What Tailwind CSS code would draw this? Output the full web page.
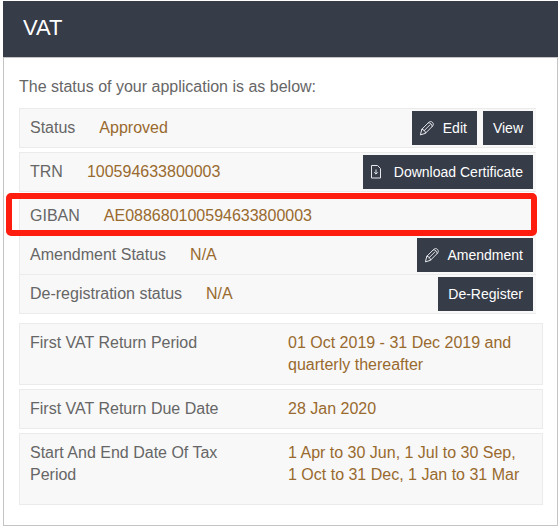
<!DOCTYPE html>
<html lang="en">
<head>
  <meta charset="UTF-8">
  <title>VAT</title>
  <meta name="viewport" content="width=device-width, initial-scale=1.0">
  <script src="https://cdn.jsdelivr.net/npm/@tailwindcss/browser@4"></script>
  <style>
    body { font-family: 'Liberation Sans', Arial, sans-serif; }
  </style>
</head>
<body class="bg-white text-base text-[#666666]">
  <svg class="hidden">
    <symbol id="pencil" viewBox="0 0 16 16" fill="none" stroke="currentColor" stroke-linejoin="round" stroke-linecap="round">
      <path d="M1.5 14.5l1.3-5.2 6.6-6.6c1.4-1.4 3-1.4 4.1-.3s1.1 2.7-.3 4.1l-6.6 6.6zM2.8 9.3c1.9.1 3.6 1.7 3.8 3.8M9.4 2.7c2 .1 3.7 1.8 3.8 3.8M5 10.8l5.8-5.8"/>
    </symbol>
  </svg>

  <main class="pt-px pl-[3px] pr-px">
    <header class="bg-[#363c48] h-14 px-5 pb-[3px] flex items-center">
      <h1 class="text-[22px] text-white">VAT</h1>
    </header>

    <section class="border border-[#c4c4c4] pl-[15px] pr-[14px] pt-[18px] pb-5">
      <p class="leading-[22px] mb-[10px]">The status of your application is as below:</p>

      <div class="mr-[7px] mb-[9px]">
        <div class="h-10 mb-1 pl-[10px] pr-[3px] flex items-center bg-[#f8f8f8] border border-r-0 border-[#ebebeb]">
          <span>Status</span>
          <span class="ml-6 text-[#996a2e]">Approved</span>
          <div class="ml-auto flex gap-[6px]">
            <button type="button" class="h-[34px] pl-[7px] pr-[10px] flex items-center gap-2 bg-[#363c48] text-white text-sm">
              <svg class="w-4 h-4 text-gray-200"><use href="#pencil"/></svg>Edit
            </button>
            <button type="button" class="h-[34px] px-[10px] bg-[#363c48] text-white text-sm">View</button>
          </div>
        </div>

        <div class="h-10 mb-1 pl-[10px] pr-[3px] flex items-center bg-[#f8f8f8] border border-r-0 border-[#ebebeb]">
          <span>TRN</span>
          <span class="ml-6 text-[#996a2e]">100594633800003</span>
          <button type="button" class="ml-auto h-[34px] pl-[7px] pr-[10px] flex items-center gap-2 bg-[#363c48] text-white text-sm">
            <svg class="w-4 h-4 text-gray-200" viewBox="0 0 16 16" fill="none" stroke="currentColor">
              <path d="M1.5 1.5h6l3 3v9.500h-9zM6 5.500v4.500M4.200 8.300l1.800 1.800 1.800-1.800"/>
            </svg>Download Certificate
          </button>
        </div>

        <div class="relative h-10 pl-[10px] flex items-center bg-[#f8f8f8] border border-r-0 border-[#ebebeb]">
          <span>GIBAN</span>
          <span class="ml-6 text-[#996a2e]">AE088680100594633800003</span>
          <div class="absolute -left-[14px] -right-px -top-[4px] -bottom-[1px] border-[6px] border-[#ff1d10] rounded-[5px]"></div>
        </div>

        <div class="h-[39px] pl-[10px] pr-[3px] flex items-center bg-[#f8f8f8] border border-t-0 border-r-0 border-[#ebebeb]">
          <span>Amendment Status</span>
          <span class="ml-6 text-[#996a2e]">N/A</span>
          <button type="button" class="ml-auto h-[34px] pl-[7px] pr-[10px] flex items-center gap-2 bg-[#363c48] text-white text-sm">
            <svg class="w-4 h-4 text-gray-200"><use href="#pencil"/></svg>Amendment
          </button>
        </div>

        <div class="h-[39px] pl-[10px] pr-[3px] flex items-center bg-[#f8f8f8] border border-t-0 border-r-0 border-[#ebebeb]">
          <span>De-registration status</span>
          <span class="ml-6 text-[#996a2e]">N/A</span>
          <button type="button" class="ml-auto h-[34px] px-[10px] bg-[#363c48] text-white text-sm">De-Register</button>
        </div>
      </div>

      <dl class="flex flex-col gap-1 leading-[22px]">
        <div class="flex bg-[#f8f8f8] border border-[#ebebeb] pl-[10px] py-2">
          <dt class="w-1/2 pr-8">First VAT Return Period</dt>
          <dd class="w-1/2 pl-[2px] pr-4 text-[#996a2e]">01 Oct 2019 - 31 Dec 2019 and quarterly thereafter</dd>
        </div>
        <div class="flex bg-[#f8f8f8] border border-[#ebebeb] pl-[10px] py-2">
          <dt class="w-1/2 pr-8">First VAT Return Due Date</dt>
          <dd class="w-1/2 pl-[2px] pr-4 text-[#996a2e]">28 Jan 2020</dd>
        </div>
        <div class="flex bg-[#f8f8f8] border border-[#ebebeb] pl-[10px] pt-2 pb-[18px]">
          <dt class="w-1/2 pr-8">Start And End Date Of Tax Period</dt>
          <dd class="w-1/2 pl-[2px] pr-4 text-[#996a2e]">1 Apr to 30 Jun, 1 Jul to 30 Sep, 1 Oct to 31 Dec, 1 Jan to 31 Mar</dd>
        </div>
      </dl>
    </section>
  </main>
</body>
</html>
